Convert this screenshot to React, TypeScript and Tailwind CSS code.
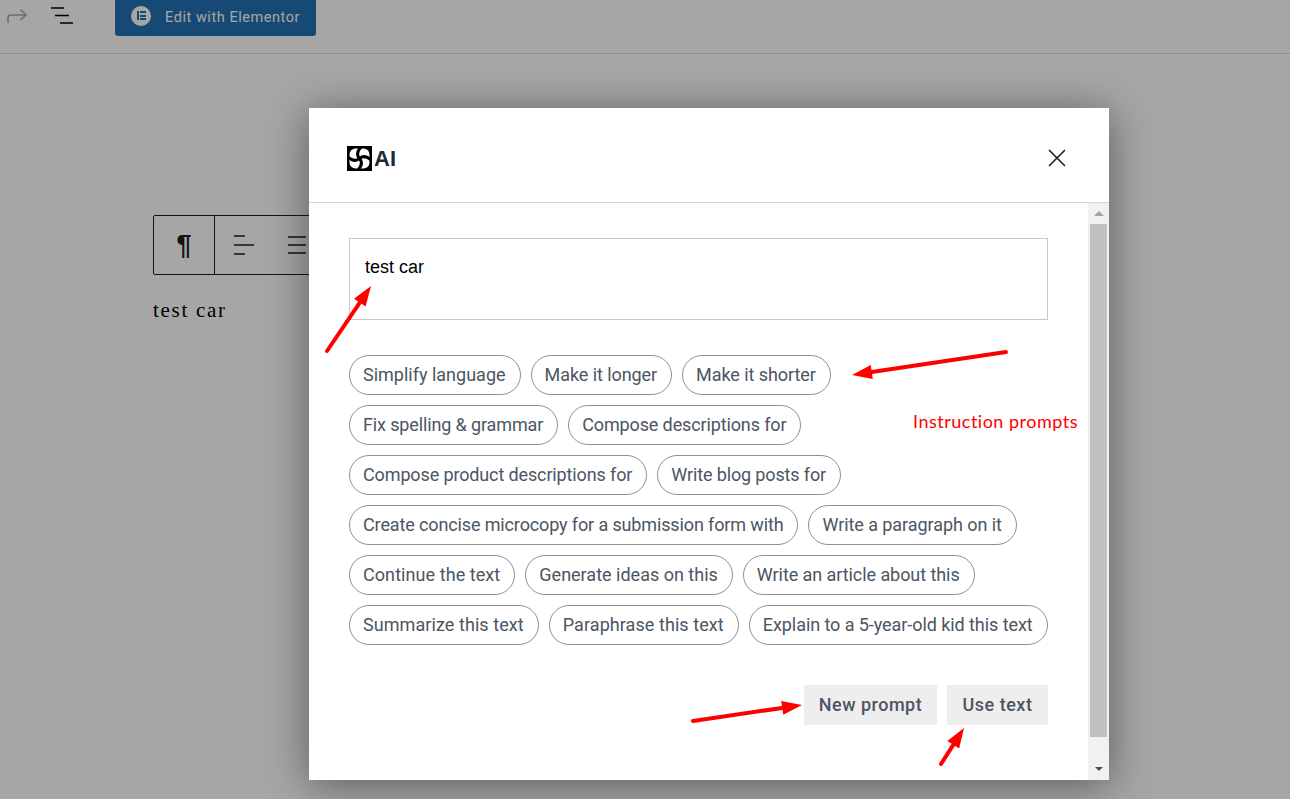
import React from "react";
import { X } from "lucide-react";

type Prompt = { label: string; fit?: string };

// tracking nudged per label, the reference's hinting runs a little narrower or wider
const narrow = "tracking-[-0.13px]";
const slight = "tracking-[-0.07px]";
const wide = "tracking-[0.07px]";

const promptRows: Prompt[][] = [
  [{ label: "Simplify language" }, { label: "Make it longer", fit: slight }, { label: "Make it shorter", fit: slight }],
  [{ label: "Fix spelling & grammar", fit: narrow }, { label: "Compose descriptions for", fit: narrow }],
  [{ label: "Compose product descriptions for", fit: narrow }, { label: "Write blog posts for", fit: narrow }],
  [{ label: "Create concise microcopy for a submission form with", fit: narrow }, { label: "Write a paragraph on it", fit: slight }],
  [{ label: "Continue the text", fit: wide }, { label: "Generate ideas on this" }, { label: "Write an article about this", fit: slight }],
  [{ label: "Summarize this text", fit: wide }, { label: "Paraphrase this text", fit: wide }, { label: "Explain to a 5-year-old kid this text", fit: slight }],
];

const arrows = [
  { from: [327, 351], to: [371, 286] },
  { from: [1006, 352], to: [852, 375] },
  { from: [693, 721], to: [802, 705] },
  { from: [941, 764], to: [964, 728] },
];

const ArrowOverlay = () => (
  <svg className="absolute left-0 top-0 w-[1290px] h-[799px] pointer-events-none" viewBox="0 0 1290 799">
    {arrows.map(({ from, to }, i) => {
      const dx = to[0] - from[0];
      const dy = to[1] - from[1];
      const len = Math.sqrt(dx * dx + dy * dy);
      const ux = dx / len;
      const uy = dy / len;
      const bx = to[0] - ux * 20;
      const by = to[1] - uy * 20;
      const head = `${to[0]},${to[1]} ${bx - uy * 7},${by + ux * 7} ${bx + uy * 7},${by - ux * 7}`;
      return (
        <g key={i}>
          <line x1={from[0]} y1={from[1]} x2={bx} y2={by} stroke="#fe0000" strokeWidth="4" strokeLinecap="round" />
          <polygon points={head} fill="#fe0000" />
        </g>
      );
    })}
  </svg>
);

const AiLogo = () => (
  <svg width="25" height="25" viewBox="0 0 25 25" className="shrink-0">
    <rect width="25" height="25" fill="#000" />
    <rect x="2.5" y="2.5" width="20" height="20" rx="6" fill="#fff" />
    {[0, 90, 180, 270].map((deg) => (
      <path
        key={deg}
        d="M12.5 12.5 Q8 7.5 14 1"
        fill="none"
        stroke="#000"
        strokeWidth="3"
        transform={`rotate(${deg} 12.5 12.5)`}
      />
    ))}
  </svg>
);

const Background = () => (
  <div className="w-full h-[799px] bg-white font-['Roboto',sans-serif]">
    <div className="h-[54px] border-b border-[#d8d8d8] flex items-start">
      <svg width="22" height="18" viewBox="0 0 22 18" className="ml-[6px] mt-[7px]" fill="none" stroke="#a9a9a9" strokeWidth="1.6">
        <path d="M2 16 V10.5 Q2 8 5 8 H20 M14.5 2.5 L20 8 L14.5 13" />
      </svg>
      <svg width="24" height="18" viewBox="0 0 24 18" className="ml-[22px] mt-[7px]" fill="none" stroke="#000" strokeWidth="1.6">
        <path d="M1 1 H14 M5 8.5 H19 M10 16 H23" />
      </svg>
      <div className="ml-[41px] w-[201px] h-[36px] bg-[#2271b1] rounded-b-[3px] flex items-center pl-[16px] gap-[14px] text-white text-[14.5px] tracking-[0.55px]">
        <span className="w-[20px] h-[20px] rounded-full bg-white flex items-center justify-center -mt-[5px]">
          <span className="w-[9px] h-[9px] flex gap-[1px]">
            <span className="w-[2px] h-full bg-[#2271b1]" />
            <span className="flex-1 flex flex-col justify-between">
              <span className="h-[2px] bg-[#2271b1]" />
              <span className="h-[2px] bg-[#2271b1]" />
              <span className="h-[2px] bg-[#2271b1]" />
            </span>
          </span>
        </span>
        <span className="-mt-[1px]">Edit with Elementor</span>
      </div>
    </div>
    <div className="pl-[153px] pt-[161px]">
      <div className="w-[300px] h-[60px] border border-[#1e1e1e] rounded-[2px] flex items-center">
        <div className="w-[61px] h-full border-r border-[#1e1e1e] flex items-center justify-center text-[27px] font-bold text-[#1e1e1e] font-['Liberation_Sans',sans-serif]">
          ¶
        </div>
        <svg width="22" height="22" viewBox="0 0 22 22" className="ml-[18px]" fill="none" stroke="#1e1e1e" strokeWidth="1.6">
          <path d="M1 2 H12 M1 11 H21 M1 20 H12" />
        </svg>
        <svg width="20" height="20" viewBox="0 0 20 20" className="ml-[32px]" fill="none" stroke="#1e1e1e" strokeWidth="1.6">
          <path d="M1 2 H19 M1 10 H19 M1 18 H19" />
        </svg>
      </div>
      <p className="mt-[23px] text-[21px] leading-[24px] tracking-[1.7px] text-black font-['Liberation_Serif',serif]">test car</p>
    </div>
  </div>
);

export default function App() {
  return (
    <div className="relative w-full h-[799px] overflow-hidden">
      <Background />
      <div className="absolute inset-0 bg-black/35 flex items-start pt-[108px] pl-[309px]">
        <div className="w-[800px] h-[672px] bg-white shadow-[0_5px_40px_rgba(0,0,0,0.45)] flex flex-col font-['Roboto',sans-serif]">
          <div className="h-[95px] shrink-0 border-b border-[#d5d5dc] flex items-center justify-between pl-[38px] pr-[38px] pt-[6px]">
            <div className="flex items-center">
              <AiLogo />
              <span className="ml-[2px] text-[22px] font-bold text-[#1f2937] font-['Liberation_Sans',sans-serif]">AI</span>
            </div>
            <X className="w-[30px] h-[30px] -mr-[1px] text-[#1f2937]" strokeWidth={1.4} />
          </div>
          <div className="flex-1 flex min-h-0">
            <div className="flex-1 pl-[40px] pr-[40px] pt-[35px]">
              <div className="h-[82px] border border-[#c8c8c8] px-[15px] pt-[17px] text-[18px] leading-[22px] text-black font-['Liberation_Sans',sans-serif]">
                test car
              </div>
              <div className="mt-[35px] flex flex-col gap-[10px]">
                {promptRows.map((row, i) => (
                  <div key={i} className="flex gap-[10px]">
                    {row.map(({ label, fit }) => (
                      <span
                        key={label}
                        className="h-[40px] pl-[13px] pr-[14px] pb-[2px] rounded-full border border-[#8c8f94] flex items-center text-[18px] text-[#4b5563] whitespace-nowrap"
                      >
                        <span className={fit}>{label}</span>
                      </span>
                    ))}
                  </div>
                ))}
              </div>
              <div className="mt-[40px] flex justify-end gap-[10px]">
                <span className="h-[40px] w-[133px] pb-[2px] bg-[#eeeeee] flex items-center justify-center text-[18px] font-medium tracking-[0.5px] text-[#4b5563]">
                  New prompt
                </span>
                <span className="h-[40px] w-[101px] pb-[2px] bg-[#eeeeee] flex items-center justify-center text-[18px] font-medium tracking-[0.5px] text-[#4b5563]">
                  Use text
                </span>
              </div>
            </div>
            <div className="w-[21px] shrink-0 bg-[#f1f1f1] flex flex-col items-center">
              <div className="h-[21px] w-full flex items-center justify-center">
                <div className="w-0 h-0 border-l-[5px] border-r-[5px] border-b-[5px] border-l-transparent border-r-transparent border-b-[#a3a3a3]" />
              </div>
              <div className="w-[17px] flex-1 bg-[#c1c1c1]" />
              <div className="h-[43px] w-full flex items-center justify-center">
                <div className="w-0 h-0 border-l-[4px] border-r-[4px] border-t-[4px] border-l-transparent border-r-transparent border-t-[#505050] mt-[20px]" />
              </div>
            </div>
          </div>
        </div>
      </div>
      <span className="absolute left-[913px] top-[410px] text-[18px] leading-[22px] tracking-[0.5px] text-[#fe0000] font-['Lato',sans-serif]">
        Instruction prompts
      </span>
      <ArrowOverlay />
    </div>
  );
}
